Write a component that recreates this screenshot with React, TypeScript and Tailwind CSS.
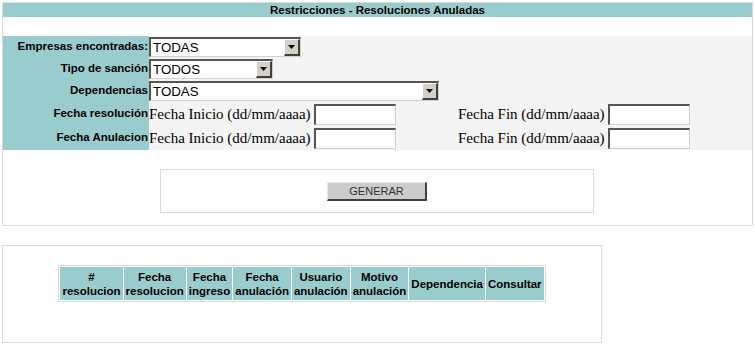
import type { ReactNode } from 'react';

const labelFont = "font-['Liberation_Sans',Arial,sans-serif] font-bold text-[11.5px] text-black";

function Select({ value, width }: { value: string; width: string }) {
  return (
    <div
      className={`${width} h-[20px] flex bg-white border-t-2 border-l-2 border-t-[#555] border-l-[#555] border-b border-r border-b-[#d4d0c8] border-r-[#d4d0c8]`}
    >
      <div className="flex-1 pl-[2px] leading-[17px] text-[13.3px] text-black font-['Liberation_Sans',Arial,sans-serif]">
        {value}
      </div>
      <div className="w-[16px] h-[17px] bg-[#d4d0c8] border-t border-l border-t-white border-l-white border-b-2 border-r-2 border-b-[#404040] border-r-[#404040] flex items-center justify-center">
        <svg width="7" height="4" viewBox="0 0 7 4">
          <path d="M0 0h7L3.5 4z" fill="#000" />
        </svg>
      </div>
    </div>
  );
}

function DateInput() {
  return (
    <div className="w-[82px] h-[21px] bg-white border-t-2 border-l-2 border-t-[#555] border-l-[#555] border-b border-r border-b-[#d4d0c8] border-r-[#d4d0c8]" />
  );
}

function FormRow({ label, h, children }: { label: string; h: string; children: ReactNode }) {
  return (
    <div className={`flex ${h}`}>
      <div className={`w-[146px] shrink-0 bg-[#99cccc] flex items-center justify-end pr-[1px] ${labelFont}`}>
        {label}
      </div>
      <div className="flex-1 flex items-center">{children}</div>
    </div>
  );
}

function DateRow({ label }: { label: string }) {
  const serif = "font-['Liberation_Serif','Times_New_Roman',serif] text-[15px] text-black";
  return (
    <FormRow label={label} h="h-[24px]">
      <div className="w-[309px] flex items-center gap-[3px]">
        <span className={serif}>Fecha Inicio (dd/mm/aaaa)</span>
        <DateInput />
      </div>
      <div className="flex items-center gap-[3px]">
        <span className={serif}>Fecha Fin (dd/mm/aaaa)</span>
        <DateInput />
      </div>
    </FormRow>
  );
}

const columns = [
  ['#', 'resolucion'],
  ['Fecha', 'resolucion'],
  ['Fecha', 'ingreso'],
  ['Fecha', 'anulación'],
  ['Usuario', 'anulación'],
  ['Motivo', 'anulación'],
  ['Dependencia'],
  ['Consultar'],
];

export default function App() {
  return (
    <div className="bg-white w-[755px] h-[350px] pt-[2px] pl-[2px]">
      {/* Filtros */}
      <div className="w-[751px] h-[224px] border border-[#dadada] flex flex-col">
        <div className={`h-[14px] bg-[#99cccc] text-center leading-[14px] ${labelFont}`}>
          Restricciones - Resoluciones Anuladas
        </div>
        <div className="h-[19px]" />
        <div className="bg-[#f4f4f4]">
          <FormRow label="Empresas encontradas:" h="h-[22px]">
            <Select value="TODAS" width="w-[152px]" />
          </FormRow>
          <FormRow label="Tipo de sanción" h="h-[22px]">
            <Select value="TODOS" width="w-[124px]" />
          </FormRow>
          <FormRow label="Dependencias" h="h-[22px]">
            <Select value="TODAS" width="w-[290px]" />
          </FormRow>
          <DateRow label="Fecha resolución" />
          <DateRow label="Fecha Anulacion" />
        </div>
        <div className="mt-[19px] ml-[157px] w-[434px] h-[44px] border border-[#dadada] flex items-center justify-center">
          <button className="w-[100px] h-[19px] bg-[#cccccc] border-t border-l border-t-[#e8e8e8] border-l-[#e8e8e8] border-b-2 border-r-2 border-b-[#404040] border-r-[#404040] text-[11px] text-[#333] font-['Liberation_Sans',Arial,sans-serif]">
            GENERAR
          </button>
        </div>
      </div>

      {/* Resultados */}
      <div className="mt-[19px] w-[600px] h-[98px] border border-[#dadada] pt-[19px] flex justify-center items-start">
        <table className="border border-[#dadada] border-separate border-spacing-[1px] bg-white">
          <thead>
            <tr>
              {columns.map((c, i) => (
                <th
                  key={i}
                  className={`bg-[#99cccc] h-[33px] px-[2px] leading-[14px] font-normal ${labelFont}`}
                >
                  {c.map((line, j) => (
                    <div key={j} className="font-bold">
                      {line}
                    </div>
                  ))}
                </th>
              ))}
            </tr>
          </thead>
        </table>
      </div>
    </div>
  );
}
